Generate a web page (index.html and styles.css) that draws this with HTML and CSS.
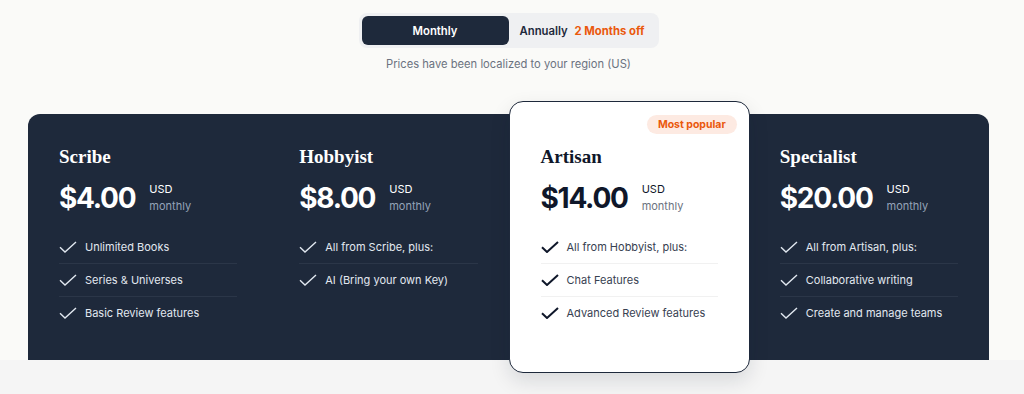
FILE: index.html
```html
<!DOCTYPE html>
<html lang="en">
<head>
  <meta charset="UTF-8" />
  <meta name="viewport" content="width=device-width, initial-scale=1.0"/>
  <title>Pricing</title>
  <link rel="stylesheet" href="styles.css">
</head>
<body>
  <section class="pricing">
    <div class="billing">
      <div class="toggle">
        <button type="button" class="toggle-btn active">Monthly</button>
        <button type="button" class="toggle-btn">Annually <span class="discount">2 Months off</span></button>
      </div>
      <p class="region-note">Prices have been localized to your region (US)</p>
    </div>

    <div class="plans">
      <div class="plan">
        <h3 class="plan-name">Scribe</h3>
        <div class="price-row">
          <span class="price">$4.00</span>
          <div class="price-meta"><span class="currency">USD</span><span class="period">monthly</span></div>
        </div>
        <ul class="features">
          <li><svg class="check" viewBox="0 0 18 12"><path d="M1 6.2 L6 11 L17 1"/></svg>Unlimited Books</li>
          <li><svg class="check" viewBox="0 0 18 12"><path d="M1 6.2 L6 11 L17 1"/></svg>Series &amp; Universes</li>
          <li><svg class="check" viewBox="0 0 18 12"><path d="M1 6.2 L6 11 L17 1"/></svg>Basic Review features</li>
        </ul>
      </div>

      <div class="plan">
        <h3 class="plan-name">Hobbyist</h3>
        <div class="price-row">
          <span class="price">$8.00</span>
          <div class="price-meta"><span class="currency">USD</span><span class="period">monthly</span></div>
        </div>
        <ul class="features">
          <li><svg class="check" viewBox="0 0 18 12"><path d="M1 6.2 L6 11 L17 1"/></svg>All from Scribe, plus:</li>
          <li><svg class="check" viewBox="0 0 18 12"><path d="M1 6.2 L6 11 L17 1"/></svg>AI (Bring your own Key)</li>
        </ul>
      </div>

      <div class="plan featured">
        <span class="badge">Most popular</span>
        <h3 class="plan-name">Artisan</h3>
        <div class="price-row">
          <span class="price">$14.00</span>
          <div class="price-meta"><span class="currency">USD</span><span class="period">monthly</span></div>
        </div>
        <ul class="features">
          <li><svg class="check" viewBox="0 0 18 12"><path d="M1 6.2 L6 11 L17 1"/></svg>All from Hobbyist, plus:</li>
          <li><svg class="check" viewBox="0 0 18 12"><path d="M1 6.2 L6 11 L17 1"/></svg>Chat Features</li>
          <li><svg class="check" viewBox="0 0 18 12"><path d="M1 6.2 L6 11 L17 1"/></svg>Advanced Review features</li>
        </ul>
      </div>

      <div class="plan">
        <h3 class="plan-name">Specialist</h3>
        <div class="price-row">
          <span class="price">$20.00</span>
          <div class="price-meta"><span class="currency">USD</span><span class="period">monthly</span></div>
        </div>
        <ul class="features">
          <li><svg class="check" viewBox="0 0 18 12"><path d="M1 6.2 L6 11 L17 1"/></svg>All from Artisan, plus:</li>
          <li><svg class="check" viewBox="0 0 18 12"><path d="M1 6.2 L6 11 L17 1"/></svg>Collaborative writing</li>
          <li><svg class="check" viewBox="0 0 18 12"><path d="M1 6.2 L6 11 L17 1"/></svg>Create and manage teams</li>
        </ul>
      </div>
    </div>
  </section>

  <section class="next-section"></section>
</body>
</html>
```

FILE: styles.css
```css
body {
  font-family: 'Inter', 'Noto Sans', sans-serif;
  margin: 0;
  padding: 0;
  background-color: #f5f5f5;
  color: #1e293b;
}

.pricing {
  background-color: #fafaf8;
  height: 360px;
  padding: 13px 35px 0 28px;
  box-sizing: border-box;
}

.billing {
  display: flex;
  flex-direction: column;
  align-items: center;
}

.toggle {
  display: flex;
  width: 300px;
  padding: 3px;
  box-sizing: border-box;
  background-color: #eff0f2;
  border-radius: 8px;
}

.toggle-btn {
  flex: 1;
  height: 29px;
  border: none;
  border-radius: 6px;
  background: transparent;
  font-family: inherit;
  font-size: 11.3px;
  font-weight: 600;
  color: #1e293b;
  cursor: pointer;
}

.toggle-btn.active {
  background-color: #1e293b;
  color: #fff;
}

.discount {
  color: #ea580c;
  font-weight: 700;
  margin-left: 4px;
}

.region-note {
  margin: 9px 0 0;
  font-size: 11.2px;
  color: #6b7280;
}

.plans {
  display: grid;
  grid-template-columns: repeat(4, 1fr);
  height: 246px;
  margin-top: 43px;
  background-color: #1e293b;
  border-radius: 12px 12px 0 0;
}

.plan {
  padding: 28px 31px 0;
  color: #fff;
}

.plan.featured {
  position: relative;
  z-index: 1;
  margin: -13px -1px -13px 0;
  padding-top: 40px;
  background-color: #fff;
  color: #0f172a;
  border: 1.5px solid #1e293b;
  border-radius: 14px;
  box-shadow: 0 8px 20px rgba(15, 23, 42, 0.12);
}

.badge {
  position: absolute;
  top: 13px;
  right: 12px;
  padding: 3px 11px;
  background-color: #fdeae2;
  color: #ea580c;
  font-size: 10.5px;
  font-weight: 700;
  border-radius: 10px;
}

.plan-name {
  margin: 0;
  font-family: 'Liberation Serif', serif;
  font-size: 19px;
  font-weight: 700;
  line-height: 30px;
}

.price-row {
  display: flex;
  align-items: center;
  gap: 14px;
  margin-top: 8px;
}

.price {
  font-size: 28px;
  font-weight: 700;
  letter-spacing: -0.045em;
  line-height: 36px;
}

.price-meta {
  display: flex;
  flex-direction: column;
  font-size: 11px;
  line-height: 17px;
}

.period {
  color: #94a3b8;
}

.featured .period {
  color: #6b7280;
}

.features {
  list-style: none;
  margin: 15px 0 0;
  padding: 0;
}

.features li {
  display: flex;
  align-items: center;
  gap: 8px;
  padding: 8px 0;
  font-size: 11px;
  line-height: 16px;
  color: #e2e8f0;
}

.features li + li {
  border-top: 1px solid #2b3648;
}

.featured .features li {
  color: #374151;
}

.featured .features li + li {
  border-top-color: #f1f1f1;
}

.check {
  width: 18px;
  height: 12px;
  flex-shrink: 0;
  fill: none;
  stroke: #e2e8f0;
  stroke-width: 1.4;
}

.featured .check {
  stroke: #0f172a;
  stroke-width: 2;
}

.next-section {
  height: 34px;
}
```
